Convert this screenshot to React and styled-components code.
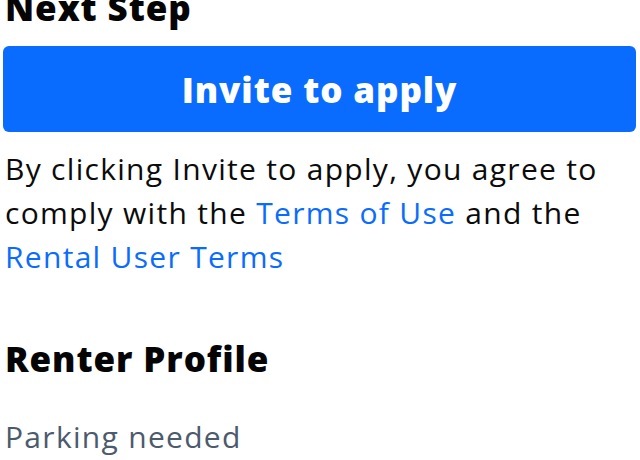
import React from "react";
import styled, { createGlobalStyle } from "styled-components";

const GlobalStyle = createGlobalStyle`
  html, body {
    margin: 0;
    padding: 0;
    background: #fff;
    overflow: hidden;
  }
  body {
    font-family: "Open Sans", "Noto Sans", sans-serif;
    color: #0b0b0b;
  }
`;

const Page = styled.div`
  width: 640px;
  height: 460px;
  box-sizing: border-box;
  padding: 0 4px 0 3px;
  display: flex;
  flex-direction: column;
`;

const Heading = styled.h2`
  margin: ${(p) => p.$top}px 0 0 2px;
  font-size: 35px;
  line-height: 40px;
  font-weight: 800;
  letter-spacing: 0.9px;
  color: #050505;
`;

const PrimaryButton = styled.button`
  margin-top: 18px;
  height: 86px;
  border: none;
  border-radius: 6px;
  background: #0a6cff;
  color: #fff;
  font-family: inherit;
  font-size: 35px;
  font-weight: 800;
  letter-spacing: 0.9px;
  cursor: pointer;
`;

const Notice = styled.p`
  margin: 15px 0 0 2px;
  font-size: 30px;
  line-height: 44px;
  letter-spacing: 1.3px;
`;

const Link = styled.a`
  color: #0a6cff;
  text-decoration: none;
`;

const Detail = styled.p`
  margin: 36px 0 0 2px;
  font-size: 30px;
  line-height: 44px;
  letter-spacing: 1.3px;
  color: #4c5a6e;
`;

export default function App() {
  return (
    <>
      <GlobalStyle />
      <Page>
        <Heading $top={-12}>Next Step</Heading>
        <PrimaryButton>Invite to apply</PrimaryButton>
        <Notice>
          By clicking Invite to apply, you agree to comply with the{" "}
          <Link href="#">Terms of Use</Link> and the{" "}
          <Link href="#">Rental User Terms</Link>
        </Notice>
        <Heading $top={60}>Renter Profile</Heading>
        <Detail>Parking needed</Detail>
      </Page>
    </>
  );
}
